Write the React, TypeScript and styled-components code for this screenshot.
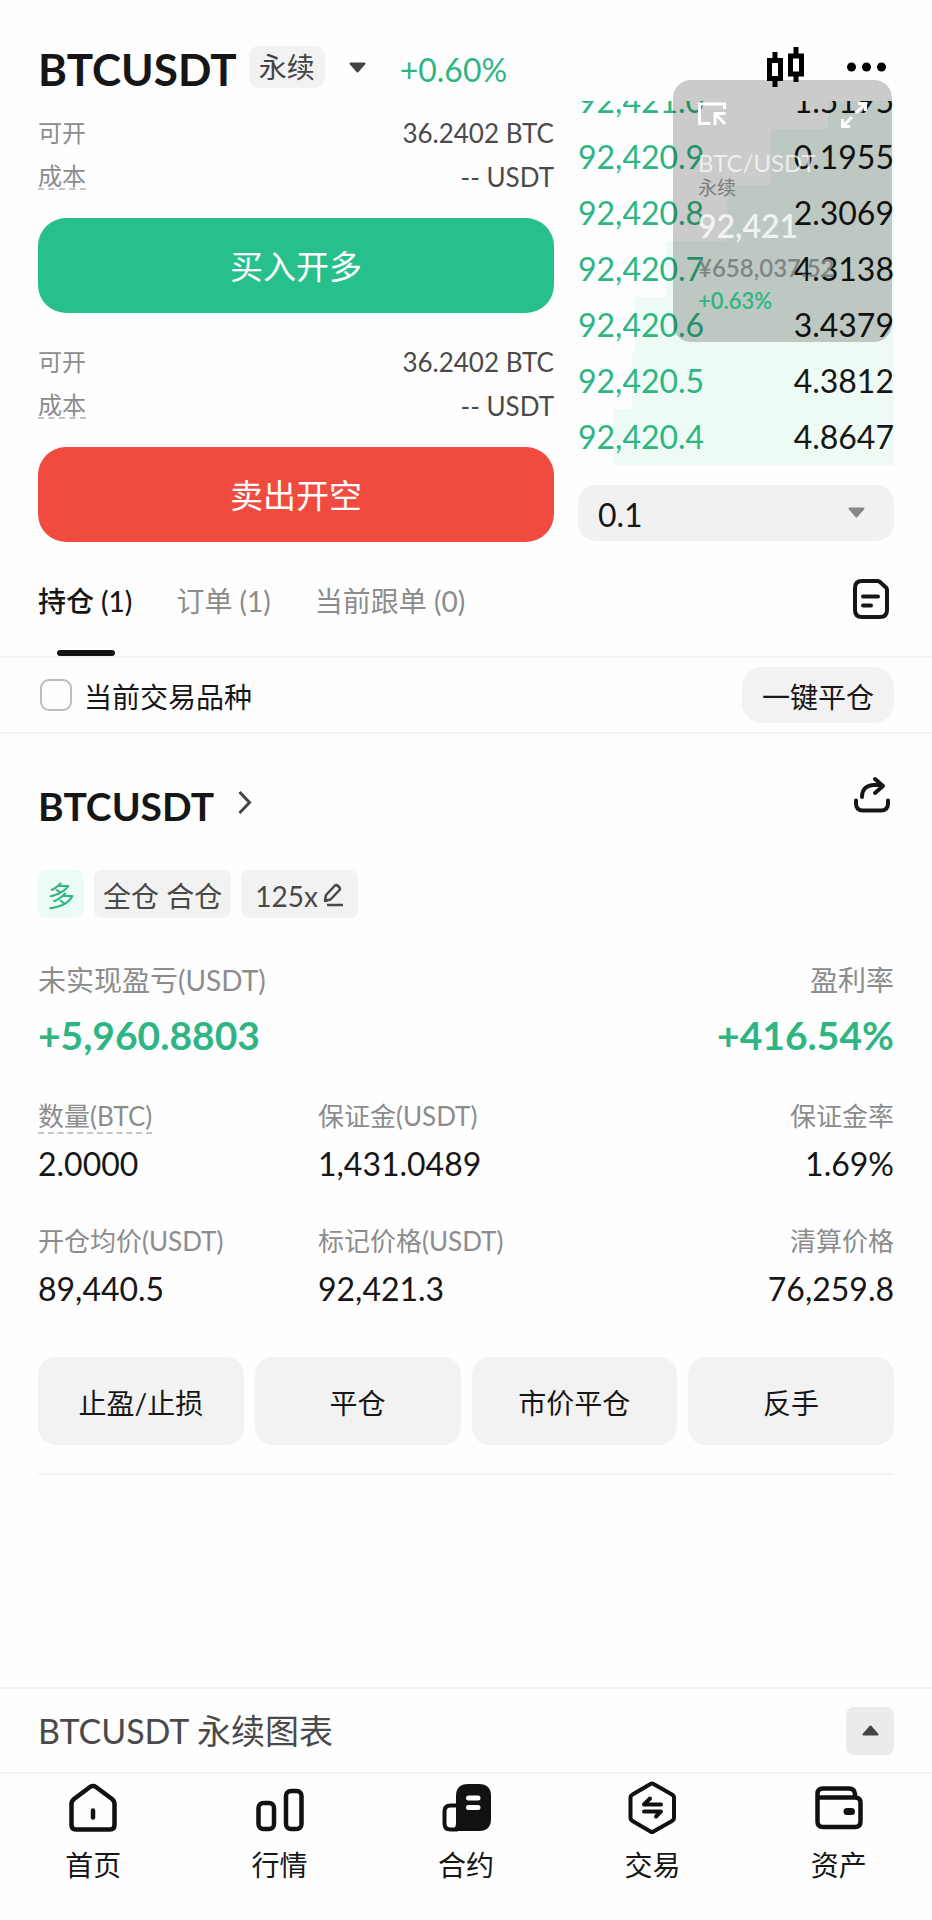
import React, { useState } from "react";
import styled, { createGlobalStyle } from "styled-components";

const GREEN = "#2fb583";
const INK = "#161616";
const GREY = "#8c8c8c";
const SOFT = "#f2f2f2";
const LINE = "#f4f4f4";

const GlobalStyle = createGlobalStyle`
  *, *::before, *::after { box-sizing: border-box; }
  body {
    margin: 0;
    background: #fefefe;
    color: ${INK};
    font-family: Lato, "Noto Sans CJK SC", sans-serif;
    font-size: 28px;
    line-height: 40px;
  }
  button, select, input { font: inherit; color: inherit; }
  button { border: 0; padding: 0; background: none; cursor: pointer; }
  a { color: inherit; text-decoration: none; }
  h1, h2, dl, dd, p { margin: 0; }
  svg { display: block; overflow: visible; }
`;

const Page = styled.div`
  position: relative;
  display: flex;
  flex-direction: column;
  min-height: 100vh;
`;

/* ---------- header ---------- */

const Header = styled.header`
  display: flex;
  align-items: flex-start;
  height: 101px;
  padding: 36px 40px 0 38px;
`;

const Symbol = styled.h1`
  font-size: 44px;
  line-height: 66px;
  font-weight: 700;
  padding-right: 12px;
`;

const ContractTag = styled.span`
  margin-top: 10px;
  padding: 0 10px;
  border-radius: 10px;
  background: ${SOFT};
  color: #444;
  line-height: 42px;
`;

const CaretButton = styled.button`
  display: flex;
  margin: 26px 34px 0 24px;
`;

const Change = styled.span`
  color: ${GREEN};
  font-size: 32px;
  line-height: 68px;
`;

const HeaderTools = styled.div`
  display: flex;
  align-items: center;
  gap: 42px;
  height: 62px;
  margin-left: auto;
  padding-right: 6px;
`;

const IconButton = styled.button`
  display: flex;
  align-items: center;
  justify-content: center;
`;

/* ---------- trading area ---------- */

const Trade = styled.section`
  display: grid;
  grid-template-columns: 516fr 316fr;
  gap: 24px;
  align-items: start;
  padding: 0 38px;
`;

const OrderForm = styled.div`
  display: grid;
  gap: 27px;
  padding-top: 10px;
`;

const OrderSide = styled.div`
  display: flex;
  flex-direction: column;
`;

const InfoRow = styled.div`
  display: flex;
  justify-content: space-between;
  align-items: center;
  height: 44px;
  font-size: 24px;
  line-height: 30px;
  color: ${GREY};
`;

const InfoValue = styled.span`
  font-size: 26px;
  color: #4a4a4a;
`;

const Dashed = styled.span`
  display: inline-block;
  border-bottom: 2px dashed #c4c4c4;
`;

const CostLabel = styled(Dashed)`
  line-height: 24px;
`;

const SubmitButton = styled.button<{ $tone: string }>`
  height: 95px;
  margin-top: 19px;
  border-radius: 28px;
  background: ${(p) => p.$tone};
  color: #fff;
  font-size: 33px;
`;

const Book = styled.div`
  display: grid;
  gap: 20px;
`;

const BookWindow = styled.div`
  display: flex;
  flex-direction: column;
  justify-content: flex-end;
  height: 364px;
  overflow: hidden;
`;

const BookTable = styled.table`
  width: 100%;
  border-collapse: collapse;
  font-size: 32px;
  line-height: 56px;
`;

const BookCell = styled.td<{ $bid?: boolean }>`
  height: 56px;
  padding: 0;
  text-align: ${(p) => (p.$bid ? "left" : "right")};
  color: ${(p) => (p.$bid ? GREEN : INK)};
`;

const StepField = styled.div`
  position: relative;
`;

const StepSelect = styled.select`
  appearance: none;
  display: block;
  width: 100%;
  height: 56px;
  padding: 4px 48px 0 20px;
  border: 0;
  border-radius: 18px;
  background: #f1f1f1;
  font-size: 32px;
`;

const StepCaret = styled.span`
  position: absolute;
  right: 29px;
  top: 22px;
  pointer-events: none;
`;

/* ---------- floating ticker ---------- */

const Floating = styled.aside`
  position: absolute;
  top: 80px;
  right: 40px;
  display: flex;
  flex-direction: column;
  width: 219px;
  height: 262px;
  padding: 22px 25px;
  border-radius: 18px;
  background: rgba(0, 0, 0, 0.2);
`;

const FloatingBar = styled.div`
  display: flex;
  justify-content: space-between;
  height: 48px;
`;

const FloatingPair = styled.p`
  font-size: 24px;
  line-height: 30px;
  color: rgba(255, 255, 255, 0.7);
`;

const FloatingKind = styled.p`
  font-size: 19px;
  line-height: 20px;
  color: #7d7d7d;
`;

const FloatingPrice = styled.p`
  font-size: 32px;
  line-height: 56px;
  font-weight: 600;
  color: rgba(255, 255, 255, 0.8);
`;

const FloatingSmall = styled.p<{ $up?: boolean }>`
  font-size: ${(p) => (p.$up ? 22 : 24)}px;
  line-height: ${(p) => (p.$up ? 38 : 28)}px;
  font-weight: 600;
  color: ${(p) => (p.$up ? GREEN : "#7f8583")};
`;

/* ---------- tabs and filter ---------- */

const TabBar = styled.div`
  display: flex;
  align-items: stretch;
  gap: 44px;
  height: 116px;
  padding: 0 43px 0 38px;
  border-bottom: 2px solid ${LINE};
`;

const Tab = styled.button<{ $active?: boolean }>`
  position: relative;
  padding-top: 4px;
  color: ${(p) => (p.$active ? INK : GREY)};
  font-weight: ${(p) => (p.$active ? 500 : 400)};
  white-space: nowrap;

  &::after {
    content: "";
    position: absolute;
    left: 50%;
    bottom: 0;
    width: 58px;
    height: 6px;
    margin-left: -28px;
    border-radius: 3px;
    background: ${(p) => (p.$active ? INK : "transparent")};
  }
`;

const TabTools = styled.div`
  display: flex;
  align-items: center;
  margin-left: auto;
`;

const FilterBar = styled.div`
  display: flex;
  align-items: center;
  justify-content: space-between;
  height: 76px;
  padding: 0 38px 0 40px;
  border-bottom: 2px solid ${LINE};
`;

const CheckLabel = styled.label`
  display: flex;
  align-items: center;
  gap: 12px;
`;

const CheckText = styled.span`
  padding-top: 4px;
`;

const CheckBox = styled.input`
  appearance: none;
  width: 32px;
  height: 32px;
  margin: 0;
  border: 2px solid #bcbcbc;
  border-radius: 9px;
  &:checked { background: ${INK}; }
`;

const CloseAll = styled.button`
  height: 56px;
  padding: 4px 20px 0;
  border-radius: 20px;
  background: ${SOFT};
`;

/* ---------- position ---------- */

const Position = styled.section`
  flex: 1;
  padding: 42px 38px 40px;
`;

const PositionHead = styled.div`
  display: flex;
  justify-content: space-between;
  align-items: flex-start;
  padding-right: 4px;
`;

const PositionName = styled.h2`
  font-size: 39px;
  line-height: 60px;
  font-weight: 700;
`;

const PositionLink = styled.a`
  display: flex;
  align-items: center;
  gap: 24px;
`;

const ChevronSlot = styled.span`
  padding-bottom: 6px;
`;

const Tags = styled.div`
  display: flex;
  margin-top: 34px;
  gap: 10px;
`;

const Tag = styled.span<{ $long?: boolean }>`
  display: flex;
  align-items: center;
  gap: 6px;
  height: 48px;
  padding: 4px 9px 0;
  border-radius: 8px;
  background: ${(p) => (p.$long ? "#edfbf5" : SOFT)};
  color: ${(p) => (p.$long ? GREEN : "#484848")};
`;

const TagButton = styled(Tag).attrs({ as: "button" })`
  padding: 4px 14px 0;
`;

const Summary = styled.dl`
  display: flex;
  justify-content: space-between;
  margin-top: 42px;
`;

const Stats = styled.dl`
  display: grid;
  grid-template-columns: 280fr 300fr 276fr;
  row-gap: 41px;
  margin-top: 40px;
`;

const Stat = styled.div<{ $end?: boolean }>`
  text-align: ${(p) => (p.$end ? "right" : "left")};
`;

const SummaryLabel = styled.dt`
  color: ${GREY};
`;

const SummaryValue = styled.dd`
  margin-top: 10px;
  font-size: 39px;
  line-height: 50px;
  font-weight: 700;
  color: ${GREEN};
`;

const StatLabel = styled.dt`
  height: 34px;
  font-size: 26px;
  line-height: 32px;
  color: ${GREY};
  white-space: nowrap;
`;

const StatValue = styled.dd`
  margin-top: 10px;
  font-size: 32px;
`;

const Actions = styled.div`
  display: grid;
  grid-template-columns: repeat(4, 1fr);
  gap: 11px;
  margin-top: 48px;
  padding-bottom: 28px;
  border-bottom: 2px solid ${LINE};
`;

const ActionButton = styled.button`
  height: 88px;
  padding-top: 4px;
  border-radius: 18px;
  background: ${SOFT};
`;

/* ---------- bottom ---------- */

const ChartBar = styled.div`
  display: flex;
  align-items: center;
  justify-content: space-between;
  height: 85px;
  padding: 0 38px;
  border-top: 2px solid ${LINE};
  color: #4a4a4a;
  font-size: 34px;
`;

const ExpandButton = styled(IconButton)`
  width: 48px;
  height: 48px;
  border-radius: 8px;
  background: #ebebeb;
`;

const Nav = styled.nav`
  display: grid;
  grid-template-columns: repeat(5, 1fr);
  border-top: 2px solid ${LINE};
  padding: 10px 0 34px;
`;

const NavItem = styled.a`
  display: flex;
  flex-direction: column;
  align-items: center;
  gap: 12px;
  line-height: 42px;
`;

/* ---------- icons ---------- */

const Triangle = ({ color, up }: { color: string; up?: boolean }) => (
  <svg width="17" height="11" viewBox="0 0 17 11" aria-hidden="true">
    <path
      d={up ? "M1.5 9.5 8.5 1.5l7 8z" : "M1.5 1.5h14l-7 8z"}
      fill={color}
      stroke={color}
      strokeWidth="2"
      strokeLinejoin="round"
    />
  </svg>
);

const CandlesIcon = () => (
  <svg width="38" height="40" viewBox="0 0 38 40" fill="none" stroke="#000" aria-hidden="true">
    <path d="M8 5v8M8 33v7M29 0v8M29 28v7" strokeWidth="5" />
    <rect x="2.5" y="13.5" width="11" height="18" strokeWidth="5" />
    <rect x="23.5" y="9" width="11" height="18" strokeWidth="5" />
  </svg>
);

const DotsIcon = () => (
  <svg width="39" height="10" viewBox="0 0 39 10" aria-hidden="true">
    <circle cx="4.5" cy="5" r="4.5" />
    <circle cx="19.5" cy="5" r="4.5" />
    <circle cx="34.5" cy="5" r="4.5" />
  </svg>
);

const DocIcon = () => (
  <svg width="36" height="40" viewBox="0 0 36 40" fill="none" stroke={INK} strokeWidth="4" strokeLinecap="round" strokeLinejoin="round" aria-hidden="true">
    <path d="M9 2h15.5q1.500 0 2.500 1l6 5.500q1 1 1 2.500v20q0 7-7 7H9q-7 0-7-7V9q0-7 7-7z" />
    <path d="M10 17.5h15M10 26.5h8" />
  </svg>
);

const ChevronIcon = () => (
  <svg width="14" height="24" viewBox="0 0 14 24" fill="none" stroke="#444" strokeWidth="3" aria-hidden="true">
    <path d="M1.5 1l10 10.5-10 10.5" />
  </svg>
);

const ShareIcon = () => (
  <svg width="36" height="38" viewBox="0 0 36 38" fill="none" stroke={INK} strokeWidth="4" strokeLinecap="round" strokeLinejoin="round" aria-hidden="true">
    <path d="M8 21c0-8 5-12 12-12h8M21 3l8 7-8 7" />
    <path d="M2 24.5v3q0 7 7 7h18q7 0 7-7v-3" />
  </svg>
);

const PencilIcon = () => (
  <svg width="20" height="24" viewBox="0 0 20 24" fill="none" stroke="#484848" strokeWidth="2.5" strokeLinejoin="round" aria-hidden="true">
    <path d="M2 11 11 1.5q1.500-1 3 .5l1.500 1.500q1 1.500 0 2.500L6.500 15.500 1 17z" />
    <path d="M3 21h16" />
  </svg>
);

const PinIcon = () => (
  <svg width="28" height="24" viewBox="0 0 28 24" fill="none" stroke="#fff" strokeWidth="3" aria-hidden="true">
    <path d="M26.5 7V2h-25v19.500h11" />
    <path d="M17 23V11.5h10.500M18 12.5l9 9.500" />
  </svg>
);

const ScaleIcon = () => (
  <svg width="26" height="26" viewBox="0 0 26 26" fill="none" stroke="#fff" strokeWidth="3" aria-hidden="true">
    <path d="M17 1.5h7.500V9M24 2 15 11M9 24.5H1.500V17M2 24l9-9" />
  </svg>
);

const navSvg = {
  width: 48,
  height: 48,
  viewBox: "0 0 48 48",
  fill: "none",
  stroke: "#111",
  strokeWidth: 4.5,
  strokeLinecap: "round" as const,
  strokeLinejoin: "round" as const,
  "aria-hidden": true,
};

const HomeIcon = () => (
  <svg {...navSvg}>
    <path d="M21 3q3-2 6 0l16 12q2.500 2 2.500 5v21q0 4.500-4.500 4.500H7q-4.500 0-4.500-4.500V20q0-3 2.500-5z" />
    <path d="M24 26.5v7" />
  </svg>
);

const MarketIcon = () => (
  <svg {...navSvg}>
    <rect x="2.5" y="19" width="15.5" height="26" rx="5" />
    <rect x="30" y="7" width="15.5" height="38" rx="5" />
  </svg>
);

const FuturesIcon = () => (
  <svg {...navSvg}>
    <path d="M15 21.5H8.500q-6 0-6 6v12q0 6 6 6H15" strokeWidth="4" />
    <path d="M14 12Q14 0 26 0h11q12 0 12 12v23q0 12-12 12H8q6-2 6-8z" fill="#111" stroke="none" />
    <path d="M26.5 14h9.500M26.500 23.500h9.500" stroke="#fff" strokeWidth="5" />
  </svg>
);

const ExchangeIcon = () => (
  <svg {...navSvg}>
    <path d="M22.5 0q1.500-1 3 0l18.500 10.500q2 1 2 3.500v19.500q0 2.500-2 3.500L25.500 47.500q-1.500 1-3 0L4.500 37q-2-1-2-3.500V14q0-2.500 2-3.500z" strokeWidth="4" />
    <path d="M33 20.5H16l6-6M16 27.500h17l-5 5" strokeWidth="4" />
  </svg>
);

const WalletIcon = () => (
  <svg {...navSvg}>
    <path d="M2.5 13.500H40q5.500 0 5.500 5.500v18.500q0 5.500-5.500 5.500H8q-5.500 0-5.500-5.500V10Q2.500 4.500 8 4.500h26q5.500 0 6 5.500v3" />
    <path d="M32 27.5h4.500" strokeWidth="7" />
  </svg>
);

/* ---------- data ---------- */

const bids = [
  { price: "92,421.0", amount: "1.5195", depth: 21 },
  { price: "92,420.9", amount: "0.1955", depth: 39 },
  { price: "92,420.8", amount: "2.3069", depth: 53 },
  { price: "92,420.7", amount: "4.3138", depth: 72 },
  { price: "92,420.6", amount: "3.4379", depth: 82 },
  { price: "92,420.5", amount: "4.3812", depth: 83 },
  { price: "92,420.4", amount: "4.8647", depth: 89 },
];

const sides = [
  { label: "买入开多", tone: "#27c08c" },
  { label: "卖出开空", tone: "#f14b40" },
];

const tabs = ["持仓 (1)", "订单 (1)", "当前跟单 (0)"];

const stats = [
  { label: "数量(BTC)", value: "2.0000", hint: true },
  { label: "保证金(USDT)", value: "1,431.0489" },
  { label: "保证金率", value: "1.69%", end: true },
  { label: "开仓均价(USDT)", value: "89,440.5" },
  { label: "标记价格(USDT)", value: "92,421.3" },
  { label: "清算价格", value: "76,259.8", end: true },
];

const actions = ["止盈/止损", "平仓", "市价平仓", "反手"];

const navItems = [
  { label: "首页", icon: <HomeIcon /> },
  { label: "行情", icon: <MarketIcon /> },
  { label: "合约", icon: <FuturesIcon /> },
  { label: "交易", icon: <ExchangeIcon /> },
  { label: "资产", icon: <WalletIcon /> },
];

export default function App() {
  const [tab, setTab] = useState(0);

  return (
    <>
      <GlobalStyle />
      <Page>
        <Header>
          <Symbol>BTCUSDT</Symbol>
          <ContractTag>永续</ContractTag>
          <CaretButton aria-label="切换合约">
            <Triangle color="#444" />
          </CaretButton>
          <Change>+0.60%</Change>
          <HeaderTools>
            <IconButton aria-label="K线"><CandlesIcon /></IconButton>
            <IconButton aria-label="更多"><DotsIcon /></IconButton>
          </HeaderTools>
        </Header>

        <Trade>
          <OrderForm>
            {sides.map((side) => (
              <OrderSide key={side.label}>
                <InfoRow>
                  <span>可开</span>
                  <InfoValue>36.2402 BTC</InfoValue>
                </InfoRow>
                <InfoRow>
                  <CostLabel>成本</CostLabel>
                  <InfoValue>-- USDT</InfoValue>
                </InfoRow>
                <SubmitButton $tone={side.tone}>{side.label}</SubmitButton>
              </OrderSide>
            ))}
          </OrderForm>

          <Book>
            <BookWindow>
              <BookTable>
                <tbody>
                  {bids.map((bid) => (
                    <tr
                      key={bid.price}
                      style={{
                        background: `linear-gradient(to left, #edfbf4 ${bid.depth}%, transparent ${bid.depth}%)`,
                      }}
                    >
                      <BookCell $bid>{bid.price}</BookCell>
                      <BookCell>{bid.amount}</BookCell>
                    </tr>
                  ))}
                </tbody>
              </BookTable>
            </BookWindow>
            <StepField>
              <StepSelect aria-label="价格精度" defaultValue="0.1">
                <option value="0.1">0.1</option>
              </StepSelect>
              <StepCaret><Triangle color="#888" /></StepCaret>
            </StepField>
          </Book>
        </Trade>

        <Floating>
          <FloatingBar>
            <PinIcon />
            <ScaleIcon />
          </FloatingBar>
          <FloatingPair>BTC/USDT</FloatingPair>
          <FloatingKind>永续</FloatingKind>
          <FloatingPrice>92,421</FloatingPrice>
          <FloatingSmall>¥658,037.52</FloatingSmall>
          <FloatingSmall $up>+0.63%</FloatingSmall>
        </Floating>

        <TabBar role="tablist">
          {tabs.map((label, i) => (
            <Tab key={label} role="tab" aria-selected={tab === i} $active={tab === i} onClick={() => setTab(i)}>
              {label}
            </Tab>
          ))}
          <TabTools>
            <IconButton aria-label="历史记录"><DocIcon /></IconButton>
          </TabTools>
        </TabBar>

        <FilterBar>
          <CheckLabel>
            <CheckBox type="checkbox" />
            <CheckText>当前交易品种</CheckText>
          </CheckLabel>
          <CloseAll>一键平仓</CloseAll>
        </FilterBar>

        <Position>
          <PositionHead>
            <PositionLink href="#position">
              <PositionName>BTCUSDT</PositionName>
              <ChevronSlot><ChevronIcon /></ChevronSlot>
            </PositionLink>
            <IconButton aria-label="分享"><ShareIcon /></IconButton>
          </PositionHead>

          <Tags>
            <Tag $long>多</Tag>
            <Tag>全仓 合仓</Tag>
            <TagButton>
              125x
              <PencilIcon />
            </TagButton>
          </Tags>

          <Summary>
            <Stat>
              <SummaryLabel>未实现盈亏(USDT)</SummaryLabel>
              <SummaryValue>+5,960.8803</SummaryValue>
            </Stat>
            <Stat $end>
              <SummaryLabel>盈利率</SummaryLabel>
              <SummaryValue>+416.54%</SummaryValue>
            </Stat>
          </Summary>

          <Stats>
            {stats.map((s) => (
              <Stat key={s.label} $end={s.end}>
                <StatLabel>{s.hint ? <Dashed>{s.label}</Dashed> : s.label}</StatLabel>
                <StatValue>{s.value}</StatValue>
              </Stat>
            ))}
          </Stats>

          <Actions>
            {actions.map((label) => (
              <ActionButton key={label}>{label}</ActionButton>
            ))}
          </Actions>
        </Position>

        <ChartBar>
          <span>BTCUSDT 永续图表</span>
          <ExpandButton aria-label="展开图表">
            <Triangle color="#444" up />
          </ExpandButton>
        </ChartBar>

        <Nav>
          {navItems.map((item) => (
            <NavItem key={item.label} href="#nav">
              {item.icon}
              {item.label}
            </NavItem>
          ))}
        </Nav>
      </Page>
    </>
  );
}
